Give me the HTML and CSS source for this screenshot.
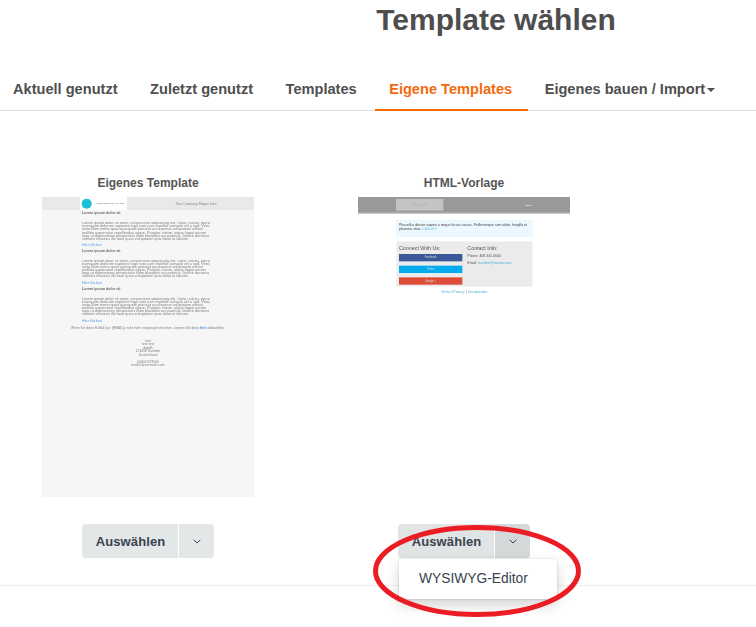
FILE: index.html
```html
<!DOCTYPE html>
<html lang="de">
<head>
<meta charset="utf-8">
<title>Template wählen</title>
<link rel="stylesheet" href="styles.css">
</head>
<body>
<div class="page">
  <h1 class="title">Template wählen</h1>
  <nav class="tabs">
    <a class="tab">Aktuell genutzt</a>
    <a class="tab">Zuletzt genutzt</a>
    <a class="tab">Templates</a>
    <a class="tab active">Eigene Templates</a>
    <a class="tab">Eigenes bauen / Import<span class="caret"></span></a>
  </nav>
  <main class="cards">
    <section class="card">
      <h2 class="card-title">Eigenes Template</h2>
      <div class="thumb thumb-own">
        <div class="preview">
          <div class="own-head">
            <div class="own-logo"><span class="own-dot"></span><span>YOUR COMPANY NAME</span></div>
            <div class="own-slogan">Your Company Slogan here</div>
          </div>
          <div class="own-body">
            <div class="own-item">
              <b class="own-h">Lorem ipsum dolor sit</b>
              <p class="own-p">Lorem ipsum dolor sit amet, consectetur adipisicing elit. Optio, soluta, porro numquam dolorum sapiente fugit sunt cum repellat cumque vel a sed. Vero, iusto illum nemo quae quisquam pariatur accusamus voluptatum officiis mollitia aspernatur repellendus atque. Pariatur, totam, atque fugiat earum fuga ut dignissimos perspiciatis illum blanditiis accusamus. Dolore ducimus veritatis maiores illo nam quas voluptatum ipsa dolor at laboris.</p>
              <span class="own-link">Hier klicken</span>
            </div>
            <div class="own-item">
              <b class="own-h">Lorem ipsum dolor sit</b>
              <p class="own-p">Lorem ipsum dolor sit amet, consectetur adipisicing elit. Optio, soluta, porro numquam dolorum sapiente fugit sunt cum repellat cumque vel a sed. Vero, iusto illum nemo quae quisquam pariatur accusamus voluptatum officiis mollitia aspernatur repellendus atque. Pariatur, totam, atque fugiat earum fuga ut dignissimos perspiciatis illum blanditiis accusamus. Dolore ducimus veritatis maiores illo nam quas voluptatum ipsa dolor at laboris.</p>
              <span class="own-link">Hier klicken</span>
            </div>
            <div class="own-item">
              <b class="own-h">Lorem ipsum dolor sit</b>
              <p class="own-p">Lorem ipsum dolor sit amet, consectetur adipisicing elit. Optio, soluta, porro numquam dolorum sapiente fugit sunt cum repellat cumque vel a sed. Vero, iusto illum nemo quae quisquam pariatur accusamus voluptatum officiis mollitia aspernatur repellendus atque. Pariatur, totam, atque fugiat earum fuga ut dignissimos perspiciatis illum blanditiis accusamus. Dolore ducimus veritatis maiores illo nam quas voluptatum ipsa dolor at laboris.</p>
              <span class="own-link">Hier klicken</span>
            </div>
          </div>
          <p class="own-unsub">Wenn Sie diese E-Mail (an: {EMAIL}) nicht mehr empfangen möchten, können Sie diese <b class="own-here">hier</b> abbestellen.</p>
          <address class="own-address">test<br>test test<br>dgbdh<br>123456 Rastede<br>Deutschland<br><br>04402 873900<br>test@cleverreach.com</address>
        </div>
      </div>
      <div class="split">
        <button class="split-main">Auswählen</button>
        <button class="split-arrow">
          <svg class="chev" viewBox="0 0 8 5"><path d="M.7.8L4 4 7.3.8"/></svg>
        </button>
      </div>
    </section>
    <section class="card">
      <h2 class="card-title">HTML-Vorlage</h2>
      <div class="thumb thumb-html">
        <div class="preview">
          <div class="html-head">
            <div class="html-logo">200 x 50</div>
            <span class="html-menu">MENU</span>
          </div>
          <div class="html-notice">
            <div>Phasellus dictum sapien a neque luctus cursus. Pellentesque sem dolor, fringilla et</div>
            <div>pharetra vitae. <span class="html-link">Click it! »</span></div>
          </div>
          <div class="html-panel">
            <div class="html-col-left">
              <div class="html-h">Connect With Us:</div>
              <div class="social fb">Facebook</div>
              <div class="social tw">Twitter</div>
              <div class="social gp">Google +</div>
            </div>
            <div class="html-col-right">
              <div class="html-h">Contact Info:</div>
              <p class="html-info">Phone: 408.341.0600</p>
              <p class="html-info">Email: <span class="html-link">hseldon@trantor.com</span></p>
            </div>
          </div>
          <div class="html-foot"><span class="html-link">Terms</span> | <span class="html-link">Privacy</span> | <span class="html-link">Unsubscribe</span></div>
        </div>
      </div>
      <div class="split open">
        <button class="split-main">Auswählen</button>
        <button class="split-arrow">
          <svg class="chev" viewBox="0 0 8 5"><path d="M.7.8L4 4 7.3.8"/></svg>
        </button>
        <div class="menu">WYSIWYG-Editor</div>
      </div>
    </section>
  </main>
  <hr class="divider">
  <svg class="ring" viewBox="0 0 210 98"><ellipse cx="105" cy="49" rx="101.5" ry="43.5"/></svg>
</div>
</body>
</html>
```
FILE: styles.css
```css
* { box-sizing: border-box; }
html, body { margin: 0; padding: 0; background: #fff; }
body { font-family: "Liberation Sans", Arial, sans-serif; color: #4f4f4f; }
.page { position: relative; width: 756px; height: 627px; overflow: hidden; }

.title {
  margin: 0;
  padding: 3px 0 0 236px;
  height: 71px;
  text-align: center;
  font-size: 30px;
  line-height: 34px;
  font-weight: 700;
  color: #4d4d4d;
}

.tabs {
  display: flex;
  gap: 4.5px;
  height: 40px;
  border-bottom: 1px solid #ddd;
}
.tab {
  position: relative;
  display: block;
  padding: 0 14px;
  font-size: 14.6px;
  line-height: 37px;
  font-weight: 700;
  color: #4f4f4f;
  white-space: nowrap;
}
.tab:first-child { padding-left: 13px; }
.tab.active { color: #f26a0f; }
.tab.active::after {
  content: "";
  position: absolute;
  left: 0;
  right: -2px;
  bottom: -1px;
  height: 2px;
  background: #f56a00;
}
.caret {
  display: inline-block;
  margin-left: 2px;
  vertical-align: 2px;
  border-top: 4px solid #4f4f4f;
  border-left: 4px solid transparent;
  border-right: 4px solid transparent;
}

.cards {
  display: flex;
  gap: 104px;
  padding: 65px 0 0 42px;
}
.card { width: 212px; display: flex; flex-direction: column; align-items: center; }
.card-title {
  margin: 0 0 7px;
  font-size: 12px;
  line-height: 14px;
  font-weight: 700;
  color: #555;
}

/* thumbnails: the template is laid out at 3x and shrunk, like a preview image */
.thumb { width: 212px; height: 300px; overflow: hidden; }
.preview {
  width: 636px;
  height: 900px;
  transform: scale(.33333);
  transform-origin: 0 0;
  filter: blur(1.1px);
}

/* own template thumbnail */
.thumb-own { background: #f6f6f6; }
.thumb-own .preview { color: #808080; font-size: 11.5px; line-height: 9.17px; }
.own-head { display: flex; height: 39px; background: #e9e9e9; padding-left: 114px; }
.own-logo {
  display: flex;
  align-items: center;
  gap: 11px;
  width: 141px;
  padding-left: 5px;
  background: #fff;
  color: #666;
  font-size: 7.5px;
  white-space: nowrap;
}
.own-dot { width: 30px; height: 30px; flex: none; border-radius: 50%; background: #19bfd3; }
.own-slogan { margin-left: 146px; font-size: 10px; line-height: 39px; color: #888; }
.own-body { padding: 4px 0 0 120px; width: 511px; }
.own-item { height: 113.5px; }
.own-h { display: block; height: 31px; font-size: 11px; line-height: 10px; color: #666; }
.own-p { margin: 0; height: 65px; overflow: hidden; }
.own-link { color: #5b9bea; }
.own-unsub { margin: 5px 0 0; text-align: center; font-size: 9.9px; line-height: 10px; }
.own-here { color: #3d8be8; }
.own-address { margin-top: 28px; text-align: center; font-style: normal; font-size: 10px; line-height: 10.5px; }

/* html template thumbnail */
.thumb-html { background: #fff; }
.thumb-html .preview { color: #555; font-size: 10.5px; line-height: 13px; }
.html-head {
  display: flex;
  justify-content: space-between;
  align-items: center;
  height: 50px;
  padding: 0 114px;
  background: #999;
  border-bottom: 3px solid #ccc;
}
.html-logo {
  width: 142px;
  height: 35px;
  background: #c4c4c4;
  color: #aaa;
  text-align: center;
  line-height: 35px;
}
.html-menu { color: #fff; font-size: 7px; }
.html-notice {
  width: 409px;
  height: 50px;
  margin: 19px 0 0 114px;
  padding: 7px 8px;
  background: #ecf8ff;
  border: 1px solid #e4f4fb;
  color: #444;
}
.html-link { color: #4ab3d8; }
.html-panel {
  display: flex;
  width: 410px;
  height: 137px;
  margin: 13px 0 0 114px;
  padding: 9px 7px;
  background: #ebebeb;
  border: 2px solid #f6f6f6;
}
.html-col-left { width: 190px; margin-right: 15px; }
.html-h { height: 28px; font-size: 16px; line-height: 20px; color: #555; }
.social { height: 22px; margin-bottom: 13px; color: #ddd; font-size: 8px; line-height: 22px; text-align: center; }
.fb { background: #3b5998; }
.tw { background: #00aced; }
.gp { background: #dd4b39; }
.html-info { margin: 0 0 7px; }
.html-foot { margin-top: 8px; text-align: center; color: #777; }

/* split button */
.split { position: relative; display: flex; height: 34px; margin-top: 27px; }
.split-main, .split-arrow {
  border: 0;
  margin: 0;
  padding: 0;
  height: 34px;
  background: #e3e7e8;
  color: #3a4350;
  font-family: "Liberation Sans", Arial, sans-serif;
  font-size: 13px;
  font-weight: 700;
  letter-spacing: .1px;
}
.split-main { width: 97px; padding-left: 1px; border-radius: 4px 0 0 4px; border-right: 1px solid #fff; }
.split-arrow { width: 35px; border-radius: 0 4px 4px 0; display: flex; align-items: center; justify-content: center; }
.open .split-main { background: #e0e4e5; }
.open .split-arrow { background: #d3d8d9; }
.chev { width: 8px; height: 5px; fill: none; stroke: #3a4350; stroke-width: 1; }
.menu {
  position: absolute;
  top: 35px;
  left: 1px;
  width: 158px;
  height: 40px;
  padding-left: 20px;
  border-radius: 3px;
  background: #fff;
  box-shadow: 0 6px 14px rgba(0, 0, 0, .18), 0 0 2px rgba(0, 0, 0, .2);
  color: #3a4350;
  font-size: 13.8px;
  line-height: 40px;
  white-space: nowrap;
  z-index: 1;
}

.divider {
  margin: 27px 0 0;
  border: 0;
  border-top: 1px solid #eee;
}
.ring {
  position: absolute;
  left: 372px;
  top: 522px;
  width: 210px;
  height: 98px;
  fill: none;
  stroke: #ec1c24;
  stroke-width: 5;
  z-index: 2;
}
```
